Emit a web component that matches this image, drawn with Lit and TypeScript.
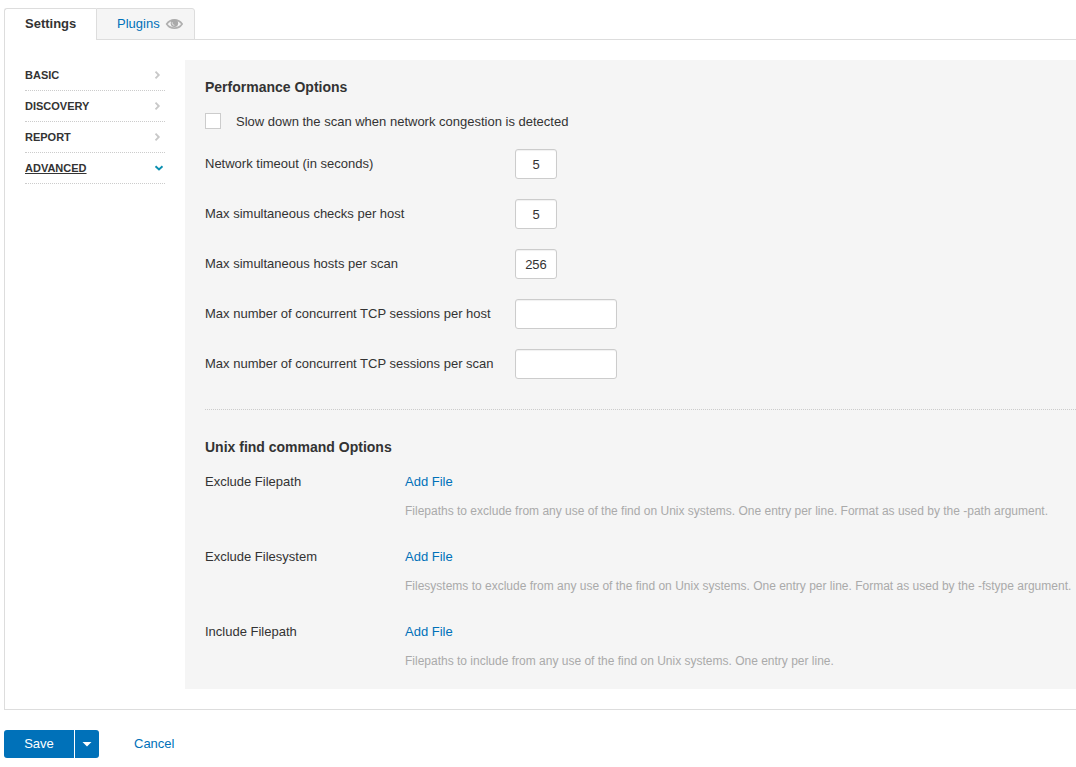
import { LitElement, html, css, svg } from "lit";
import { customElement } from "lit/decorators.js";
import { classMap } from "lit/directives/class-map.js";

const NAV = [
  { label: "BASIC", active: false },
  { label: "DISCOVERY", active: false },
  { label: "REPORT", active: false },
  { label: "ADVANCED", active: true },
];

const FIELDS = [
  { label: "Network timeout (in seconds)", value: "5", wide: false },
  { label: "Max simultaneous checks per host", value: "5", wide: false },
  { label: "Max simultaneous hosts per scan", value: "256", wide: false },
  { label: "Max number of concurrent TCP sessions per host", value: "", wide: true },
  { label: "Max number of concurrent TCP sessions per scan", value: "", wide: true },
];

const FILES = [
  {
    label: "Exclude Filepath",
    hint: "Filepaths to exclude from any use of the find on Unix systems. One entry per line. Format as used by the -path argument.",
  },
  {
    label: "Exclude Filesystem",
    hint: "Filesystems to exclude from any use of the find on Unix systems. One entry per line. Format as used by the -fstype argument.",
  },
  {
    label: "Include Filepath",
    hint: "Filepaths to include from any use of the find on Unix systems. One entry per line.",
  },
];

const chevronRight = svg`<path d="M5.5 1.7 8.8 5 5.5 8.3" fill="none" stroke="#c8c8c8" stroke-width="1.8"/>`;
const chevronDown = svg`<path d="M5.5 3.2 9 6.5 12.5 3.2" fill="none" stroke="#0a8fb0" stroke-width="1.9"/>`;

@customElement("app-root")
export class AppRoot extends LitElement {
  static styles = css`
    :host {
      display: block;
      box-sizing: border-box;
      height: 767px;
      padding: 8px 0 0 4px;
      overflow: hidden;
      background: #fff;
      color: #333;
      font: 13px/15px "Liberation Sans", Arial, sans-serif;
    }
    * { box-sizing: border-box; }
    .tabs { display: flex; height: 32px; margin-bottom: -1px; position: relative; }
    .tab { display: flex; height: 32px; border: 1px solid #ddd; padding: 0 20px; line-height: 30px; }
    .tab.current {
      width: 92px;
      border-right: 0;
      border-bottom: 0;
      border-radius: 3px 0 0 0;
      background: #fff;
      font-weight: bold;
    }
    .tab.other {
      width: 99px;
      padding-right: 0;
      border-radius: 0 3px 0 0;
      background: #f5f5f5;
      color: #0071b9;
    }
    .eye { display: block; width: 18px; height: 12px; margin: 9px 0 0 5px; }
    .panel {
      display: flex;
      gap: 20px;
      height: 671px;
      padding: 20px 0 20px 20px;
      border: 1px solid #ddd;
      border-right: 0;
    }
    .nav { flex: none; width: 140px; }
    .item {
      display: flex;
      justify-content: space-between;
      height: 31px;
      border-bottom: 1px dotted #ccc;
      font-size: 11px;
      font-weight: bold;
      line-height: 30px;
    }
    .active .name { text-decoration: underline; }
    .chev { display: block; width: 15px; height: 10px; margin-top: 10px; }
    .content { flex: 1; min-width: 0; padding: 20px 0 0 20px; background: #f5f5f5; white-space: nowrap; }
    .title { height: 14px; margin: 0; font-size: 14px; line-height: 14px; font-weight: bold; }
    .check { display: flex; height: 16px; margin: 19px 0 20px; gap: 15px; line-height: 17px; }
    .box { width: 16px; height: 16px; border: 1px solid #ccc; background: #fff; }
    .field { display: flex; height: 30px; margin-bottom: 20px; }
    .caption { width: 310px; line-height: 29px; }
    .input {
      width: 42px;
      height: 30px;
      margin: 0;
      padding: 1px 0 0;
      border: 1px solid #ccc;
      border-radius: 3px;
      background: #fff;
      box-shadow: inset 0 1px 1px rgba(0, 0, 0, 0.06);
      color: #333;
      font: inherit;
      text-align: center;
      outline: none;
    }
    .input.wide { width: 102px; }
    .divider { height: 1px; margin: 30px 0; border-top: 1px dotted #ccc; }
    .files { display: flex; flex-direction: column; margin-top: 20px; }
    .file { display: grid; grid-template-columns: 200px 1fr; row-gap: 15px; height: 75px; align-content: start; }
    .link { color: #0071b9; }
    .hint { grid-column: 2; color: #aaa; font-size: 12px; line-height: 15px; }
    .actions { display: flex; height: 28px; margin-top: 20px; line-height: 28px; }
    .save { width: 70px; border-radius: 3px 0 0 3px; background: #0071b9; color: #fff; text-align: center; }
    .more {
      display: flex;
      align-items: center;
      justify-content: center;
      width: 24px;
      margin-left: 1px;
      border-radius: 0 3px 3px 0;
      background: #0071b9;
    }
    .caret { width: 10px; height: 6px; }
    .cancel { margin-left: 35px; color: #0071b9; }
  `;

  render() {
    return html`
      <div class="tabs">
        <div class="tab current">Settings</div>
        <div class="tab other">
          <span>Plugins</span>
          <svg class="eye" viewBox="0 0 18 12">
            <path d="M1.7 6C5.3 .4 13.5 .4 17.1 6 13.5 11.6 5.3 11.6 1.7 6Z" fill="#f5f5f5" stroke="#b0b0b0" stroke-width="1.7" />
            <circle cx="9.4" cy="5.2" r="3.7" fill="#aaa" />
            <path d="M7.2 4.3V5.2A2.2 2.2 0 0 0 9.4 7.3" fill="none" stroke="#e6e6e6" stroke-width="1" />
          </svg>
        </div>
      </div>
      <div class="panel">
        <nav class="nav">
          ${NAV.map(
            (n) => html`<div class=${classMap({ item: true, active: n.active })}>
              <span class="name">${n.label}</span>
              <svg class="chev" viewBox="0 0 15 10">${n.active ? chevronDown : chevronRight}</svg>
            </div>`
          )}
        </nav>
        <div class="content">
          <h2 class="title">Performance Options</h2>
          <div class="check"><span class="box"></span><span>Slow down the scan when network congestion is detected</span></div>
          ${FIELDS.map(
            (f) => html`<div class="field">
              <span class="caption">${f.label}</span>
              <input class=${classMap({ input: true, wide: f.wide })} .value=${f.value} />
            </div>`
          )}
          <div class="divider"></div>
          <h2 class="title">Unix find command Options</h2>
          <div class="files">
            ${FILES.map(
              (f) => html`<div class="file">
                <span>${f.label}</span><span class="link">Add File</span>
                <span class="hint">${f.hint}</span>
              </div>`
            )}
          </div>
        </div>
      </div>
      <div class="actions">
        <span class="save">Save</span>
        <span class="more"><svg class="caret" viewBox="0 0 10 6"><path d="M.5 .9H9.5L5 5.6Z" fill="#fff" /></svg></span>
        <span class="cancel">Cancel</span>
      </div>
    `;
  }
}
